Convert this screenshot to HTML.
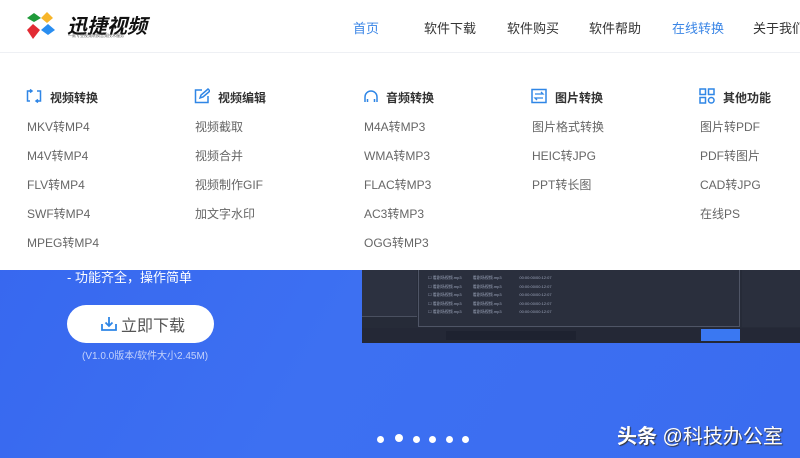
<!DOCTYPE html>
<html><head><meta charset="utf-8"><style>
*{margin:0;padding:0;box-sizing:border-box}
body{width:800px;height:458px;overflow:hidden;position:relative;font-family:"Liberation Sans","Noto Sans CJK SC",sans-serif;background:#3a6cf0}
.a{position:absolute;white-space:nowrap}
.hero{position:absolute;left:0;top:0;width:800px;height:458px;background:linear-gradient(120deg,#3565ee 0%,#3d70f2 50%,#3a6cf0 100%)}
.hdr{position:absolute;left:0;top:0;width:800px;height:53px;background:#fff;border-bottom:1px solid #eef0f4}
.drop{position:absolute;left:0;top:53px;width:800px;height:217px;background:#fff}
.nav{font-size:13px;color:#333;top:18px}
.h{font-size:12px;font-weight:bold;color:#333;top:89px}
.it{font-size:12px;color:#666}
.ic{position:absolute;top:88px;width:16px;height:16px}
.dot{position:absolute;top:436px;width:7px;height:7px;border-radius:50%;background:#fff}
.row{position:absolute;left:428px;font-size:4px;color:#9aa3b8}
</style></head><body>
<div class="hero"></div>
<div class="a" style="left:362px;top:270px;width:438px;height:73px;background:#262b38"></div>
<div class="a" style="left:362px;top:270px;width:55px;height:47px;background:#2c3140;border-bottom:1px solid #4a5060"></div>
<div class="a" style="left:418px;top:270px;width:322px;height:57px;background:#2a2f3d;border:1px solid #4f5566;border-top:none"></div>
<div class="a" style="left:742px;top:270px;width:58px;height:57px;background:#2a2f3d"></div>
<div class="a" style="left:362px;top:328px;width:438px;height:15px;background:#242836"></div>
<div class="a" style="left:446px;top:331px;width:130px;height:9px;background:#1e2230"></div>
<div class="a" style="left:701px;top:329px;width:39px;height:12px;background:#3a78f2"></div>
<div class="row" style="top:275px">☐ 看剧场视频.mp3 &nbsp;&nbsp;&nbsp;&nbsp;&nbsp;&nbsp;&nbsp;&nbsp; 看剧场视频.mp3 &nbsp;&nbsp;&nbsp;&nbsp;&nbsp;&nbsp;&nbsp;&nbsp;&nbsp;&nbsp;&nbsp;&nbsp;&nbsp;&nbsp; 00:00:00/00:12:07</div>
<div class="row" style="top:284px">☐ 看剧场视频.mp3 &nbsp;&nbsp;&nbsp;&nbsp;&nbsp;&nbsp;&nbsp;&nbsp; 看剧场视频.mp3 &nbsp;&nbsp;&nbsp;&nbsp;&nbsp;&nbsp;&nbsp;&nbsp;&nbsp;&nbsp;&nbsp;&nbsp;&nbsp;&nbsp; 00:00:00/00:12:07</div>
<div class="row" style="top:292px">☐ 看剧场视频.mp3 &nbsp;&nbsp;&nbsp;&nbsp;&nbsp;&nbsp;&nbsp;&nbsp; 看剧场视频.mp3 &nbsp;&nbsp;&nbsp;&nbsp;&nbsp;&nbsp;&nbsp;&nbsp;&nbsp;&nbsp;&nbsp;&nbsp;&nbsp;&nbsp; 00:00:00/00:12:07</div>
<div class="row" style="top:301px">☐ 看剧场视频.mp3 &nbsp;&nbsp;&nbsp;&nbsp;&nbsp;&nbsp;&nbsp;&nbsp; 看剧场视频.mp3 &nbsp;&nbsp;&nbsp;&nbsp;&nbsp;&nbsp;&nbsp;&nbsp;&nbsp;&nbsp;&nbsp;&nbsp;&nbsp;&nbsp; 00:00:00/00:12:07</div>
<div class="row" style="top:309px">☐ 看剧场视频.mp3 &nbsp;&nbsp;&nbsp;&nbsp;&nbsp;&nbsp;&nbsp;&nbsp; 看剧场视频.mp3 &nbsp;&nbsp;&nbsp;&nbsp;&nbsp;&nbsp;&nbsp;&nbsp;&nbsp;&nbsp;&nbsp;&nbsp;&nbsp;&nbsp; 00:00:00/00:12:07</div>

<div class="a" style="left:67px;top:267px;font-size:13px;color:#fff">- 功能齐全，操作简单</div>
<div class="a" style="left:67px;top:305px;width:147px;height:38px;border-radius:19px;background:#fff"></div>
<svg class="a" style="left:101px;top:316px" width="16" height="15" viewBox="0 0 16 15"><path d="M1 8v6h14V8M8 1v9M4.5 6.5L8 10l3.5-3.5" fill="none" stroke="#2f86e6" stroke-width="1.8"/></svg>
<div class="a" style="left:121px;top:312px;font-size:16px;color:#555">立即下载</div>
<div class="a" style="left:82px;top:347px;font-size:10px;color:#c5d3fb">(V1.0.0版本/软件大小2.45M)</div>

<div class="dot" style="left:377px"></div><div class="dot" style="left:395px;top:434px;width:8px;height:8px"></div><div class="dot" style="left:413px"></div><div class="dot" style="left:429px"></div><div class="dot" style="left:446px"></div><div class="dot" style="left:462px"></div>
<div class="a" style="left:617px;top:420px;font-size:20px;color:#fff;text-shadow:1px 1px 1px #333"><b>头条</b> @科技办公室</div>

<div class="hdr"></div>
<svg class="a" style="left:26px;top:11px" width="32" height="30" viewBox="0 0 32 30">
<path d="M1 7l7-5 7 5-7 4z" fill="#1f9a3a"/><path d="M15 7l6-6 6 6-6 5z" fill="#f7b52a"/>
<path d="M1 19l6-6 7 6-7 9z" fill="#e22b33"/><path d="M15 19l7-6 7 6-7 5z" fill="#2a8ef0"/></svg>
<div class="a" style="left:67px;top:10px;font-size:20px;font-weight:bold;font-style:italic;color:#111">迅捷视频</div>
<div class="a" style="left:68px;top:33px;font-size:4px;color:#555">一款专业视频转换音频技术服务</div>
<div class="a nav" style="left:353px;color:#3b86e6">首页</div>
<div class="a nav" style="left:424px">软件下载</div>
<div class="a nav" style="left:507px">软件购买</div>
<div class="a nav" style="left:589px">软件帮助</div>
<div class="a nav" style="left:672px;color:#3b86e6">在线转换</div>
<div class="a nav" style="left:753px">关于我们</div>

<div class="drop"></div>
<svg class="ic" style="left:26px" viewBox="0 0 16 16"><path d="M5 3H1.5v10H4M11 3h3.5v10H11M4 1.5L6 3 4 4.5M12 11.5L10 13l2 1.5" fill="none" stroke="#2f86e6" stroke-width="1.5"/></svg>
<div class="a h" style="left:50px">视频转换</div>
<svg class="ic" style="left:194px" viewBox="0 0 16 16"><path d="M8 2H1.5v12.5H14V8M6 10l1-3 7-6 2 2-7 6z" fill="none" stroke="#2f86e6" stroke-width="1.5"/></svg>
<div class="a h" style="left:218px">视频编辑</div>
<svg class="ic" style="left:363px" viewBox="0 0 16 16"><path d="M2 14V9a6 6 0 0 1 12 0v5M4.5 11v3M11.5 11v3" fill="none" stroke="#2f86e6" stroke-width="1.5"/></svg>
<div class="a h" style="left:386px">音频转换</div>
<svg class="ic" style="left:531px" viewBox="0 0 16 16"><rect x="1" y="1.5" width="14" height="13" fill="none" stroke="#2f86e6" stroke-width="1.5"/><path d="M4 6h8l-2-2M12 10H4l2 2" fill="none" stroke="#2f86e6" stroke-width="1.3"/></svg>
<div class="a h" style="left:555px">图片转换</div>
<svg class="ic" style="left:699px" viewBox="0 0 16 16"><g fill="none" stroke="#2f86e6" stroke-width="1.5"><rect x="1" y="1" width="5.5" height="5.5"/><rect x="9.5" y="1" width="5.5" height="5.5"/><rect x="1" y="9.5" width="5.5" height="5.5"/><circle cx="12.25" cy="12.25" r="2.8"/></g></svg>
<div class="a h" style="left:723px">其他功能</div>

<div class="a it" style="left:27px;top:118px">MKV转MP4</div>
<div class="a it" style="left:27px;top:147px">M4V转MP4</div>
<div class="a it" style="left:27px;top:176px">FLV转MP4</div>
<div class="a it" style="left:27px;top:205px">SWF转MP4</div>
<div class="a it" style="left:27px;top:234px">MPEG转MP4</div>
<div class="a it" style="left:195px;top:118px">视频截取</div>
<div class="a it" style="left:195px;top:147px">视频合并</div>
<div class="a it" style="left:195px;top:176px">视频制作GIF</div>
<div class="a it" style="left:195px;top:205px">加文字水印</div>
<div class="a it" style="left:364px;top:118px">M4A转MP3</div>
<div class="a it" style="left:364px;top:147px">WMA转MP3</div>
<div class="a it" style="left:364px;top:176px">FLAC转MP3</div>
<div class="a it" style="left:364px;top:205px">AC3转MP3</div>
<div class="a it" style="left:364px;top:234px">OGG转MP3</div>
<div class="a it" style="left:532px;top:118px">图片格式转换</div>
<div class="a it" style="left:532px;top:147px">HEIC转JPG</div>
<div class="a it" style="left:532px;top:176px">PPT转长图</div>
<div class="a it" style="left:700px;top:118px">图片转PDF</div>
<div class="a it" style="left:700px;top:147px">PDF转图片</div>
<div class="a it" style="left:700px;top:176px">CAD转JPG</div>
<div class="a it" style="left:700px;top:205px">在线PS</div>
</body></html>
